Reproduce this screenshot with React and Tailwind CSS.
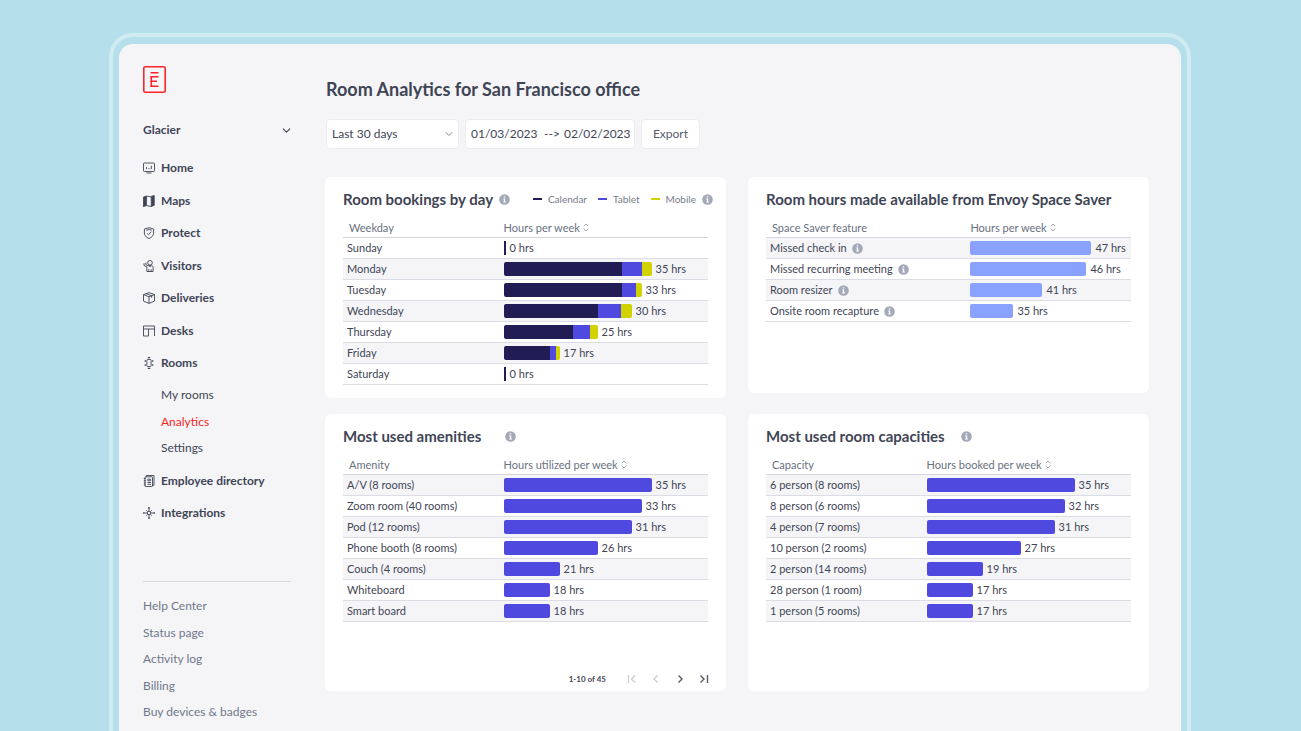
import { ChevronDown } from "lucide-react";

const mainNav = [
  { label: "Home", icon: "home" },
  { label: "Maps", icon: "maps" },
  { label: "Protect", icon: "protect" },
  { label: "Visitors", icon: "visitors" },
  { label: "Deliveries", icon: "deliveries" },
  { label: "Desks", icon: "desks" },
  { label: "Rooms", icon: "rooms" },
];

const roomLinks = ["My rooms", "Analytics", "Settings"];

const footerLinks = [
  "Help Center",
  "Status page",
  "Activity log",
  "Billing",
  "Buy devices & badges",
];

const NAVY = "#211d54";
const INDIGO = "#4f49e0";
const LIME = "#d2d200";
const SKY = "#8aa2ff";

const bookings = [
  { name: "Sunday", hours: 0, bars: [[2, NAVY]] },
  { name: "Monday", hours: 35, bars: [[118, NAVY], [20, INDIGO], [10, LIME]] },
  { name: "Tuesday", hours: 33, bars: [[118, NAVY], [14, INDIGO], [6, LIME]] },
  { name: "Wednesday", hours: 30, bars: [[94, NAVY], [23, INDIGO], [11, LIME]] },
  { name: "Thursday", hours: 25, bars: [[69, NAVY], [17, INDIGO], [8, LIME]] },
  { name: "Friday", hours: 17, bars: [[46, NAVY], [6, INDIGO], [4, LIME]] },
  { name: "Saturday", hours: 0, bars: [[2, NAVY]] },
];

const spaceSaver = [
  { name: "Missed check in", info: true, hours: 47, bars: [[121, SKY]] },
  { name: "Missed recurring meeting", info: true, hours: 46, bars: [[116, SKY]] },
  { name: "Room resizer", info: true, hours: 41, bars: [[72, SKY]] },
  { name: "Onsite room recapture", info: true, hours: 35, bars: [[43, SKY]] },
];

const amenities = [
  { name: "A/V (8 rooms)", hours: 35, bars: [[148, INDIGO]] },
  { name: "Zoom room (40 rooms)", hours: 33, bars: [[138, INDIGO]] },
  { name: "Pod (12 rooms)", hours: 31, bars: [[128, INDIGO]] },
  { name: "Phone booth (8 rooms)", hours: 26, bars: [[94, INDIGO]] },
  { name: "Couch (4 rooms)", hours: 21, bars: [[56, INDIGO]] },
  { name: "Whiteboard", hours: 18, bars: [[46, INDIGO]] },
  { name: "Smart board", hours: 18, bars: [[46, INDIGO]] },
];

const capacities = [
  { name: "6 person (8 rooms)", hours: 35, bars: [[148, INDIGO]] },
  { name: "8 person (6 rooms)", hours: 32, bars: [[138, INDIGO]] },
  { name: "4 person (7 rooms)", hours: 31, bars: [[128, INDIGO]] },
  { name: "10 person (2 rooms)", hours: 27, bars: [[94, INDIGO]] },
  { name: "2 person (14 rooms)", hours: 19, bars: [[56, INDIGO]] },
  { name: "28 person (1 room)", hours: 17, bars: [[46, INDIGO]] },
  { name: "1 person (5 rooms)", hours: 17, bars: [[46, INDIGO]] },
];

const iconPaths = {
  home: (
    <>
      <rect x="0.5" y="1" width="11" height="8.5" rx="0.8" />
      <path d="M3.5 5v2.2M6 6v1.2M8.3 3.7v3.5M3.5 11h5" />
    </>
  ),
  maps: (
    <>
      <path d="M.3 2.2 3.4 1v9.6L.3 11.6zM8.3 1.4l2.9-.9v9.8l-2.9 1.2z" fill="currentColor" />
      <path d="M3.4 1l4.9 1M3.4 10.6l4.9.9" />
    </>
  ),
  protect: (
    <>
      <path d="M6 .7 10.6 2v4c0 2.7-1.9 4.4-4.6 5.5C3.3 10.4 1.4 8.7 1.4 6V2z" />
      <path d="M3.2 3.2 6 2.5l2.8.7M4.2 6.4l1.3 1.3 2.7-3" />
    </>
  ),
  visitors: (
    <>
      <circle cx="7" cy="2.8" r="2.3" />
      <path d="M1 3.2v2.3l2.9 1.4v4.6h6.2V7.3c0-1-.7-1.6-1.5-1.6H5.2L2.9 4.7V2.5M5.8 11.5V9.3M8.2 11.5V9.3M6 5.8l1 1 1-1" />
    </>
  ),
  deliveries: (
    <path d="M6 .6 11.5 2.6v6.5L6 11.4.5 9.1V2.6zM.5 2.6 6 4.8l5.5-2.2M6 4.8v6.6M3.2 1.6l5.5 2.2v2" />
  ),
  desks: <path d="M11.5 11V1H.5v10h5V4M.5 4h11" />,
  rooms: (
    <>
      <rect x="3.9" y="2.5" width="4.2" height="7" rx="0.8" />
      <path
        d="M4.8.7h2.4M4.8 11.3h2.4M2.3 3.3v1.4M2.3 7.3v1.4M9.7 3.3v1.4M9.7 7.3v1.4"
        strokeWidth="1.3"
      />
    </>
  ),
  directory: (
    <>
      <rect x="2" y="1.8" width="7.5" height="9.7" rx="0.6" />
      <path d="M3.2 1.8V.5h7.8v9.8H9.5M.8 3.5h2M.8 5.7h2M.8 7.9h2M.8 10h2M4.8 4.2h2.8v1.6H4.8zM4.5 7.5h3.5M4.5 9.3h3.5" />
    </>
  ),
  integrations: (
    <>
      <circle cx="6" cy="6" r="1.7" />
      <path d="M6 1.5v2.8M6 7.7v2.8M1.5 6h2.8M7.7 6h2.8M3.3 3.3l1.3 1.3M7.4 7.4l1.3 1.3M8.7 3.3 7.4 4.6M4.6 7.4 3.3 8.7" />
      <path
        d="M5.1.3h1.8v1.5H5.1zM5.1 10.2h1.8v1.5H5.1zM.1 5.2h1.5v1.6H.1zM10.4 5.2h1.5v1.6h-1.5z"
        fill="currentColor"
        stroke="none"
      />
    </>
  ),
};

const NavIcon = ({ name }) => (
  <svg
    viewBox="0 0 12 12"
    className="w-3 h-3 shrink-0"
    fill="none"
    stroke="currentColor"
    strokeWidth="0.9"
    aria-hidden="true"
  >
    {iconPaths[name]}
  </svg>
);

const Logo = () => (
  <svg viewBox="0 0 23 27" className="w-[23px] h-[27px]" fill="#fb2529" role="img" aria-label="Envoy">
    <rect x="0.8" y="0.8" width="21.4" height="25.4" rx="1.5" fill="none" stroke="#fb2529" strokeWidth="1.6" />
    <rect x="7.5" y="6" width="8" height="1.5" />
    <rect x="7.5" y="10" width="1.6" height="11" />
    <rect x="7.5" y="10" width="8" height="1.5" />
    <rect x="7.5" y="14.5" width="6.5" height="1.5" />
    <rect x="7.5" y="19.5" width="8" height="1.5" />
  </svg>
);

const InfoIcon = () => (
  <svg viewBox="0 0 11 11" className="w-[11px] h-[11px] shrink-0" aria-hidden="true">
    <circle cx="5.5" cy="5.5" r="5.3" fill="#a3a9b8" />
    <path d="M4.8 2.3h1.4v1.3H4.8zM4.2 4.6h2v2.9h.7v.9H4.2v-.9h.7V5.5h-.7z" fill="#fff" />
  </svg>
);

const SortIcon = () => (
  <svg viewBox="0 0 6 9" className="w-[6px] h-[9px]" fill="none" stroke="#8b90a0" strokeWidth="0.8" aria-hidden="true">
    <path d="M.7 3.3 3 1l2.3 2.3M.7 5.7 3 8l2.3-2.3" />
  </svg>
);

const NavLink = ({ label, icon }) => (
  <a href="#" className="flex items-center gap-[6px] h-5 text-[12px] font-bold">
    <NavIcon name={icon} />
    {label}
  </a>
);

const Sidebar = () => (
  <aside className="w-[206px] shrink-0 pl-6 pr-[34px] pt-[22px]">
    <Logo />
    <button className="mt-[27px] w-[150px] h-5 flex items-center justify-between text-[12px] font-bold">
      Glacier
      <ChevronDown size={13} strokeWidth={2} />
    </button>

    <nav className="mt-[18px]">
      <div className="h-[215px] flex flex-col justify-between">
        {mainNav.map((item) => (
          <NavLink key={item.label} {...item} />
        ))}
      </div>
      <div className="mt-3 h-[73px] flex flex-col justify-between pl-[18px]">
        {roomLinks.map((label) => (
          <a
            key={label}
            href="#"
            className={`h-5 leading-5 text-[12px] ${label === "Analytics" ? "text-[#fb1d24]" : ""}`}
          >
            {label}
          </a>
        ))}
      </div>
      <div className="mt-[13px] flex flex-col gap-3">
        <NavLink label="Employee directory" icon="directory" />
        <NavLink label="Integrations" icon="integrations" />
      </div>
    </nav>

    <div className="mt-[58px] border-t border-[#d9dae0] pt-[14px]">
      <div className="h-[126px] flex flex-col justify-between text-[#717788]">
        {footerLinks.map((label) => (
          <a key={label} href="#" className="h-5 leading-5 text-[12px] whitespace-nowrap">
            {label}
          </a>
        ))}
      </div>
    </div>
  </aside>
);

const Legend = () => (
  <div className="ml-auto flex items-center gap-[11px] text-[10px] text-[#777c8c]">
    <span className="flex items-center gap-[6px]">
      <i className="w-[9px] h-[2px] bg-[#211d54]" />
      Calendar
    </span>
    <span className="flex items-center gap-[6px]">
      <i className="w-[9px] h-[2px] bg-[#4f49e0]" />
      Tablet
    </span>
    <span className="flex items-center gap-[6px]">
      <i className="w-[9px] h-[2px] bg-[#d2d200]" />
      Mobile
      <InfoIcon />
    </span>
  </div>
);

const Card = ({ title, info, legend, columns, rows, wideName, shadeEven, className, children }) => (
  <section className={`bg-white rounded-md pt-[10px] flex flex-col ${className}`}>
    <div className="h-6 pl-[18px] pr-[13px] flex items-center">
      <h2 className="text-[15px] leading-6 font-bold whitespace-nowrap">{title}</h2>
      {info && <span className={info}><InfoIcon /></span>}
      {legend && <Legend />}
    </div>
    <div className="px-[18px] pt-[5px]">
      <table className="w-full table-fixed border-separate border-spacing-0 text-[11px] leading-4">
        <thead>
          <tr className="text-left text-[#6a7080]">
            <th className={`h-[22px] p-0 pl-[6px] pt-[2px] font-normal border-b border-[#d5d6e0] ${wideName ? "w-[56%]" : "w-[44%]"}`}>
              {columns[0]}
            </th>
            <th className="h-[22px] p-0 pt-[2px] font-normal border-b border-[#d5d6e0]">
              <span className="flex items-center gap-[3px]">
                {columns[1]}
                <SortIcon />
              </span>
            </th>
          </tr>
        </thead>
        <tbody>
          {rows.map((row, i) => (
            <tr key={row.name} className={(i % 2 === 1) === !!shadeEven ? "bg-[#f5f5f8]" : ""}>
              <td className="h-[21px] p-0 pl-1 border-b border-[#dcdde4]">
                <span className="flex items-center gap-[5px]">
                  {row.name}
                  {row.info && <InfoIcon />}
                </span>
              </td>
              <td className="h-[21px] p-0 border-b border-[#dcdde4]">
                <span className="flex items-center gap-1">
                  <span className={`flex h-[14px] overflow-hidden ${row.hours ? "rounded-[2px]" : ""}`}>
                    {row.bars.map(([width, color]) => (
                      <i key={color} style={{ width, backgroundColor: color }} />
                    ))}
                  </span>
                  {row.hours} hrs
                </span>
              </td>
            </tr>
          ))}
        </tbody>
      </table>
    </div>
    {children}
  </section>
);

const Pagination = () => (
  <div className="mt-auto pr-[10px] flex items-center justify-end h-6">
    <span className="mr-[14px] text-[8px] font-bold">1-10 of 45</span>
    <button aria-label="First page" disabled className="w-6 h-6 flex items-center justify-center text-[#c9cbd1]">
      <svg viewBox="0 0 10 10" className="w-[10px] h-[10px]" fill="none" stroke="currentColor" strokeWidth="1.2">
        <path d="M1.5 1v8M8 1.5 4.5 5 8 8.5" />
      </svg>
    </button>
    <button aria-label="Previous page" disabled className="w-6 h-6 flex items-center justify-center text-[#c9cbd1]">
      <svg viewBox="0 0 10 10" className="w-[10px] h-[10px]" fill="none" stroke="currentColor" strokeWidth="1.2">
        <path d="M6.5 1.5 3 5l3.5 3.5" />
      </svg>
    </button>
    <button aria-label="Next page" className="w-6 h-6 flex items-center justify-center text-[#555a66]">
      <svg viewBox="0 0 10 10" className="w-[10px] h-[10px]" fill="none" stroke="currentColor" strokeWidth="1.4">
        <path d="M3.5 1.5 7 5 3.5 8.5" />
      </svg>
    </button>
    <button aria-label="Last page" className="w-6 h-6 flex items-center justify-center text-[#555a66]">
      <svg viewBox="0 0 10 10" className="w-[10px] h-[10px]" fill="none" stroke="currentColor" strokeWidth="1.4">
        <path d="M1.5 1.5 5 5 1.5 8.5M8.5 1v8" />
      </svg>
    </button>
  </div>
);

const Filters = () => (
  <form className="mt-[18px] pl-px h-[30px] flex gap-[6px] text-[12px]">
    <div className="relative w-[133px]">
      <select
        aria-label="Period"
        className="appearance-none w-full h-full pl-[5px] bg-white border border-[#ececf1] rounded"
      >
        <option>Last 30 days</option>
      </select>
      <ChevronDown
        size={12}
        strokeWidth={2}
        className="absolute right-1 top-[9px] text-[#7d8393] pointer-events-none"
      />
    </div>
    <div className="w-[170px] pl-[5px] flex items-center bg-white border border-[#ececf1] rounded">
      <input aria-label="From" defaultValue="01/03/2023" className="w-[73px] outline-none" />
      <span className="w-[20px] whitespace-nowrap">--&gt;</span>
      <input aria-label="To" defaultValue="02/02/2023" className="flex-1 min-w-0 outline-none" />
    </div>
    <button type="button" className="w-[59px] bg-white border border-[#ececf1] rounded text-[#555b6b]">
      Export
    </button>
  </form>
);

const App = () => {
  return (
    <div className="min-h-screen flex bg-[#b5dfea] pt-[33px] pl-[109px] pr-[110px] font-['Lato',sans-serif] text-[#3f4555]">
      <div className="flex-1 flex border-4 border-b-0 border-[#d1ebf2] rounded-t-3xl px-[6px] pt-[7px]">
        <div className="flex-1 flex bg-[#f5f5f8] rounded-t-[14px]">
          <Sidebar />
          <main className="flex-1 min-w-0 pr-8 pt-[33px] pb-10">
            <h1 className="pl-px text-[18px] leading-6 font-bold">
              Room Analytics for San Francisco office
            </h1>
            <Filters />
            <div className="mt-7 grid grid-cols-2 gap-x-[22px] gap-y-4">
              <Card
                title="Room bookings by day"
                info="ml-[6px]"
                legend
                columns={["Weekday", "Hours per week"]}
                rows={bookings}
                shadeEven
                className="min-h-[221px]"
              />
              <Card
                title="Room hours made available from Envoy Space Saver"
                columns={["Space Saver feature", "Hours per week"]}
                rows={spaceSaver}
                wideName
                className="min-h-[216px] self-start"
              />
              <Card
                title="Most used amenities"
                info="ml-6"
                columns={["Amenity", "Hours utilized per week"]}
                rows={amenities}
                className="min-h-[277px]"
              >
                <Pagination />
              </Card>
              <Card
                title="Most used room capacities"
                info="ml-4"
                columns={["Capacity", "Hours booked per week"]}
                rows={capacities}
                className="min-h-[277px]"
              />
            </div>
          </main>
        </div>
      </div>
    </div>
  );
};

export default App;
